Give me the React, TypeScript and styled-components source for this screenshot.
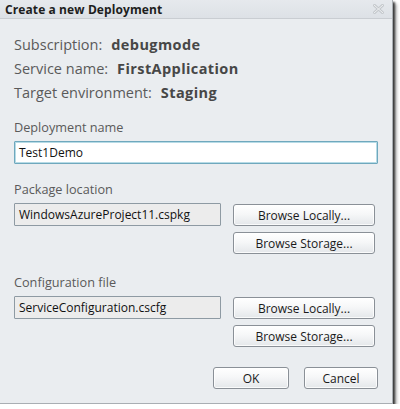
import React from "react";
import styled, { createGlobalStyle } from "styled-components";

const Global = createGlobalStyle`
  html, body { margin: 0; padding: 0; background: #ffffff; }
  body { font-family: "Open Sans", "Noto Sans", sans-serif; }
`;

const Dialog = styled.div`
  width: 393px;
  height: 404px;
  box-sizing: border-box;
  background: #eaedf0;
  border-right: 1px solid #a9aeb3;
  border-bottom: 1px solid #a9aeb3;
  box-shadow: 2px 2px 2px rgba(0,0,0,0.7), 4px 4px 3px rgba(0,0,0,0.25);
  display: flex;
  flex-direction: column;
`;

const TitleBar = styled.div`
  height: 19px;
  box-sizing: border-box;
  background: linear-gradient(#e6e9ed, #dde1e6);
  border-bottom: 1px solid #c9cdd2;
  display: flex;
  align-items: center;
  justify-content: space-between;
  padding: 0 8px 0 5px;
`;

const Title = styled.span`
  font-size: 12px;
  font-weight: 700;
  color: #1e1e1e;
  letter-spacing: 0.1px;
`;

const Body = styled.div`
  display: flex;
  flex-direction: column;
  padding: 14px 14px 0 14px;
`;

const InfoRow = styled.div`
  height: 24px;
  line-height: 24px;
  font-size: 14.5px;
  color: #5a5a5a;
  white-space: nowrap;
`;

const InfoValue = styled.b`
  color: #474747;
  margin-left: 9px;
  letter-spacing: 0.4px;
`;

const Label = styled.div<{ $top: number }>`
  margin-top: ${(p) => p.$top}px;
  height: 18px;
  line-height: 18px;
  font-size: 12.7px;
  color: #5a5a5a;
`;

const TextBox = styled.div<{ $active?: boolean; $width?: string }>`
  box-sizing: border-box;
  height: 23px;
  width: ${(p) => p.$width || "100%"};
  border: 1px solid ${(p) => (p.$active ? "#6fa8bd" : "#8e9aa3")};
  box-shadow: ${(p) => (p.$active ? "inset 0 0 0 1px #b7dbe6" : "none")};
  background: ${(p) => (p.$active ? "#ffffff" : "#ececec")};
  border-radius: 1px;
  padding: 0 4px;
  display: flex;
  align-items: center;
  font-size: 12px;
  color: #111;
  white-space: nowrap;
`;

const FileRow = styled.div`
  margin-top: 5px;
  display: flex;
  align-items: flex-start;
  justify-content: space-between;
`;

const ButtonCol = styled.div`
  display: flex;
  flex-direction: column;
  gap: 6px;
  padding-top: 1px;
  margin-right: 3px;
`;

const Button = styled.div<{ $width: number }>`
  box-sizing: border-box;
  width: ${(p) => p.$width}px;
  height: 22px;
  border: 1px solid #8a9097;
  border-radius: 3px;
  background: linear-gradient(#ffffff 0%, #f6f7f8 45%, #e4e7ea 100%);
  box-shadow: inset 0 0 0 1px rgba(255,255,255,0.8);
  display: flex;
  align-items: center;
  justify-content: center;
  font-size: 12px;
  color: #1a1a1a;
`;

const Footer = styled.div`
  margin-top: 20px;
  display: flex;
  justify-content: flex-end;
  gap: 15px;
`;

const CloseIcon = () => (
  <svg width="11" height="10" viewBox="0 0 11 10">
    <path
      d="M1 1 L10 9 M10 1 L1 9"
      stroke="#c4c8cc"
      strokeWidth="3"
      strokeLinecap="square"
    />
    <path
      d="M1 1 L10 9 M10 1 L1 9"
      stroke="#eef0f2"
      strokeWidth="1"
      strokeLinecap="square"
    />
  </svg>
);

export default function App() {
  return (
    <>
      <Global />
      <Dialog>
        <TitleBar>
          <Title>Create a new Deployment</Title>
          <CloseIcon />
        </TitleBar>
        <Body>
          <InfoRow>
            Subscription:<InfoValue>debugmode</InfoValue>
          </InfoRow>
          <InfoRow>
            Service name:<InfoValue>FirstApplication</InfoValue>
          </InfoRow>
          <InfoRow>
            Target environment:<InfoValue>Staging</InfoValue>
          </InfoRow>

          <Label $top={13}>Deployment name</Label>
          <FileRow>
            <TextBox $active>Test1Demo</TextBox>
          </FileRow>

          <Label $top={16}>Package location</Label>
          <FileRow>
            <TextBox $width="207px">WindowsAzureProject11.cspkg</TextBox>
            <ButtonCol>
              <Button $width={142}>Browse Locally...</Button>
              <Button $width={142}>Browse Storage...</Button>
            </ButtonCol>
          </FileRow>

          <Label $top={19}>Configuration file</Label>
          <FileRow>
            <TextBox $width="207px">ServiceConfiguration.cscfg</TextBox>
            <ButtonCol>
              <Button $width={142}>Browse Locally...</Button>
              <Button $width={142}>Browse Storage...</Button>
            </ButtonCol>
          </FileRow>

          <Footer>
            <Button $width={76}>OK</Button>
            <Button $width={74}>Cancel</Button>
          </Footer>
        </Body>
      </Dialog>
    </>
  );
}
